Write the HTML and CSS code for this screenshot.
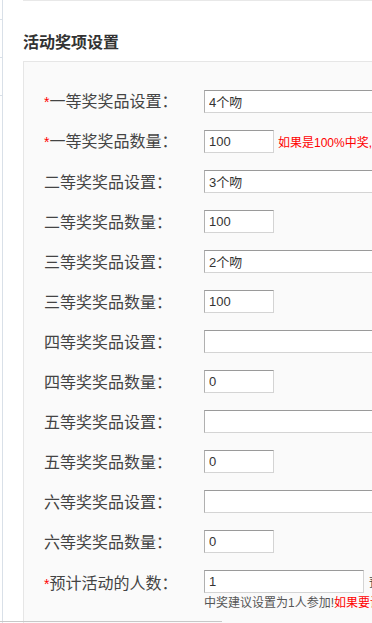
FILE: index.html
```html
<!DOCTYPE html>
<html lang="zh">
<head>
<meta charset="utf-8">
<link rel="stylesheet" href="styles.css">
</head>
<body>
<div class="page">
  <div class="side">
    <div class="tick"></div>
    <div class="tick"></div>
    <div class="tick"></div>
  </div>
  <div class="main">
    <h2 class="title">活动奖项设置</h2>
    <div class="panel">
      <div class="row"><label class="lbl"><span class="req">*</span>一等奖奖品设置<span class="colon">：</span></label><input class="txt" type="text" value="4个吻"></div>
      <div class="row"><label class="lbl"><span class="req">*</span>一等奖奖品数量<span class="colon">：</span></label><input class="num" type="text" value="100"><span class="warn">如果是100%中奖,请设置奖品数量</span></div>
      <div class="row"><label class="lbl">二等奖奖品设置<span class="colon">：</span></label><input class="txt" type="text" value="3个吻"></div>
      <div class="row"><label class="lbl">二等奖奖品数量<span class="colon">：</span></label><input class="num" type="text" value="100"></div>
      <div class="row"><label class="lbl">三等奖奖品设置<span class="colon">：</span></label><input class="txt" type="text" value="2个吻"></div>
      <div class="row"><label class="lbl">三等奖奖品数量<span class="colon">：</span></label><input class="num" type="text" value="100"></div>
      <div class="row"><label class="lbl">四等奖奖品设置<span class="colon">：</span></label><input class="txt" type="text" value=""></div>
      <div class="row"><label class="lbl">四等奖奖品数量<span class="colon">：</span></label><input class="num" type="text" value="0"></div>
      <div class="row"><label class="lbl">五等奖奖品设置<span class="colon">：</span></label><input class="txt" type="text" value=""></div>
      <div class="row"><label class="lbl">五等奖奖品数量<span class="colon">：</span></label><input class="num" type="text" value="0"></div>
      <div class="row"><label class="lbl">六等奖奖品设置<span class="colon">：</span></label><input class="txt" type="text" value=""></div>
      <div class="row"><label class="lbl">六等奖奖品数量<span class="colon">：</span></label><input class="num" type="text" value="0"></div>
      <div class="row last">
        <label class="lbl"><span class="req">*</span>预计活动的人数<span class="colon">：</span></label>
        <div class="ctrl">
          <div class="line"><input class="mid" type="text" value="1"><span class="after">预计参与活动的人数</span></div>
          <div class="hint">中奖建议设置为1人参加!<span class="red">如果要设置多人参加</span></div>
        </div>
      </div>
    </div>
  </div>
</div>
<div class="scrollline"></div>
</body>
</html>
```

FILE: styles.css
```css
html, body {
  margin: 0;
  padding: 0;
  background: #ffffff;
  overflow: hidden;
}
body {
  font-family: "Liberation Sans", "Noto Sans CJK SC", sans-serif;
  color: #333;
  width: 372px;
  height: 623px;
}
.page {
  display: flex;
  width: 600px;
  height: 623px;
}
.side {
  width: 2px;
  border-right: 1px solid #d9e0e8;
  flex: none;
}
.tick {
  height: 37px;
  border-bottom: 1px solid #d9e0e8;
}
.tick:first-child {
  height: 19px;
}
.main {
  margin-left: 20px;
  flex: 1;
  border-top: 1px solid #e8e8e8;
}
.title {
  margin: 0;
  padding: 29px 0 0;
  height: 31px;
  font-size: 16px;
  line-height: 22px;
  font-weight: bold;
  color: #333;
  font-family: "Noto Sans CJK SC", sans-serif;
}
.panel {
  border-top: 1px solid #e6e6e6;
  border-left: 1px solid #e6e6e6;
  background: #fafafa;
  padding: 19px 0 20px 20px;
  height: 600px;
}
.row {
  display: flex;
  align-items: center;
  height: 40px;
}
.lbl {
  width: 160px;
  flex: none;
  font-size: 16px;
  color: #444;
  font-family: "Noto Sans CJK SC", sans-serif;
  line-height: 20px;
  white-space: nowrap;
}
.colon {
  font-family: "Noto Sans CJK TC", "Noto Sans CJK SC", sans-serif;
}
.req {
  color: #ff0000;
  font-family: "Liberation Sans", sans-serif;
  font-size: 14px;
}
input {
  box-sizing: border-box;
  height: 23px;
  margin: 0;
  padding: 0 4px;
  font-size: 13px;
  font-family: "Liberation Sans", "Noto Sans CJK SC", sans-serif;
  color: #333;
  background: #fff;
  border: 1px solid #d4d4d4;
  border-top-color: #9a9a9a;
  border-left-color: #b0b0b0;
}
.txt {
  width: 260px;
}
.num {
  width: 70px;
}
.mid {
  width: 160px;
}
.warn {
  margin-left: 4px;
  color: #ff0000;
  font-size: 12px;
  white-space: nowrap;
  font-family: "Liberation Sans", "Noto Sans CJK SC", sans-serif;
}
.row.last {
  align-items: flex-start;
  height: 60px;
  padding-top: 9px;
  box-sizing: border-box;
}
.row.last .lbl {
  padding-top: 2px;
}
.ctrl {
  display: flex;
  flex-direction: column;
}
.line {
  display: flex;
  align-items: center;
  white-space: nowrap;
}
.after {
  margin-left: 5px;
  font-size: 12px;
  color: #444;
}
.hint {
  margin-top: 2px;
  font-size: 12px;
  line-height: 16px;
  color: #555;
  white-space: nowrap;
}
.red {
  color: #ff0000;
}
.scrollline {
  position: fixed;
  left: 0;
  bottom: 1px;
  width: 222px;
  height: 1px;
  background: #c8c8c8;
}
```
